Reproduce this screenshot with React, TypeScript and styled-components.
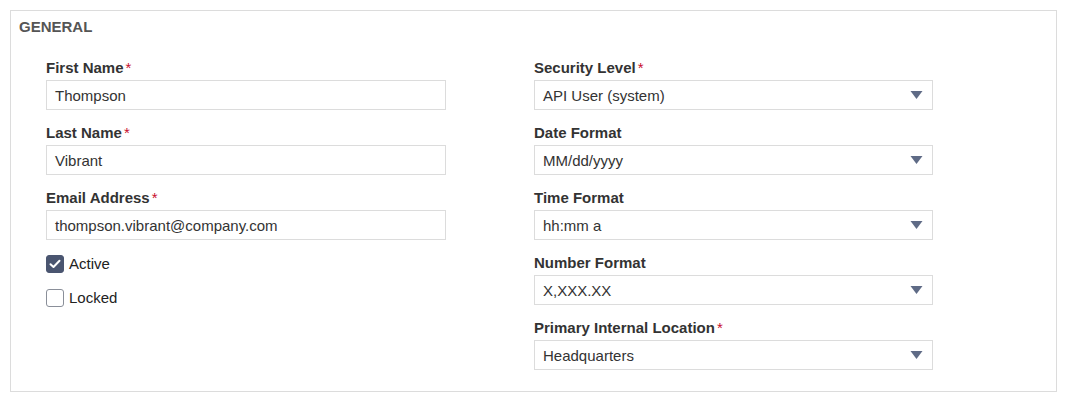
import React from "react";
import styled, { createGlobalStyle } from "styled-components";

const GlobalStyle = createGlobalStyle`
  body {
    margin: 0;
    background: #fff;
    font-family: "Liberation Sans", Arial, sans-serif;
  }
`;

interface FieldProps {
  label: string;
  value: string;
  required?: boolean;
  select?: boolean;
}

const Field = ({ label, value, required, select }: FieldProps) => (
  <FieldWrap>
    <Label>
      {label}
      {required && <Star>*</Star>}
    </Label>
    <Input $select={select}>
      <span>{value}</span>
      {select && (
        <Arrow viewBox="0 0 12 8">
          <path d="M0 0 H12 L6 8 Z" fill="#5f6b86" />
        </Arrow>
      )}
    </Input>
  </FieldWrap>
);

const CheckIcon = () => (
  <svg width="12" height="10" viewBox="0 0 12 10">
    <path
      d="M1.5 5.2 L4.5 8 L10.5 1.8"
      fill="none"
      stroke="#fff"
      strokeWidth="2"
      strokeLinecap="round"
      strokeLinejoin="round"
    />
  </svg>
);

export default function App() {
  return (
    <>
      <GlobalStyle />
      <Section>
        <SectionTitle>GENERAL</SectionTitle>
        <Columns>
          <Column>
            <Field label="First Name" value="Thompson" required />
            <Field label="Last Name" value="Vibrant" required />
            <Field
              label="Email Address"
              value="thompson.vibrant@company.com"
              required
            />
            <Checks>
              <CheckRow>
                <Box $checked>
                  <CheckIcon />
                </Box>
                Active
              </CheckRow>
              <CheckRow>
                <Box />
                Locked
              </CheckRow>
            </Checks>
          </Column>
          <Column>
            <Field
              label="Security Level"
              value="API User (system)"
              required
              select
            />
            <Field label="Date Format" value="MM/dd/yyyy" select />
            <Field label="Time Format" value="hh:mm a" select />
            <Field label="Number Format" value="X,XXX.XX" select />
            <Field
              label="Primary Internal Location"
              value="Headquarters"
              required
              select
            />
          </Column>
        </Columns>
      </Section>
    </>
  );
}

const Section = styled.div`
  box-sizing: border-box;
  margin: 10px 10px 0 10px;
  width: 1047px;
  height: 382px;
  border: 1px solid #dcdcdc;
  padding: 7px 8px 0 8px;
`;
const SectionTitle = styled.div`
  font-size: 15px;
  font-weight: 700;
  line-height: 18px;
  color: #555;
`;
const Columns = styled.div`
  display: grid;
  grid-template-columns: 400px 399px;
  column-gap: 88px;
  padding-left: 27px;
  margin-top: 23px;
`;
const Column = styled.div`
  display: flex;
  flex-direction: column;
  gap: 14px;
`;
const FieldWrap = styled.div`
  display: flex;
  flex-direction: column;
  gap: 3px;
`;
const Label = styled.div`
  font-size: 15px;
  font-weight: 700;
  line-height: 18px;
  color: #333;
`;
const Star = styled.span`
  color: #c8102e;
  font-weight: 400;
  margin-left: 2px;
`;
const Input = styled.div<{ $select?: boolean }>`
  box-sizing: border-box;
  height: 30px;
  border: 1px solid #dcdcdc;
  padding: 0 8px;
  display: flex;
  align-items: center;
  justify-content: space-between;
  font-size: 15px;
  color: #333;
  background: #fff;
`;
const Arrow = styled.svg`
  width: 13px;
  height: 8px;
  margin-right: 1px;
`;
const Checks = styled.div`
  display: flex;
  flex-direction: column;
  gap: 16px;
  margin-top: 1px;
`;
const CheckRow = styled.div`
  display: flex;
  align-items: center;
  gap: 5px;
  font-size: 15px;
  line-height: 18px;
  color: #222;
`;
const Box = styled.div<{ $checked?: boolean }>`
  box-sizing: border-box;
  width: 18px;
  height: 18px;
  border-radius: 3px;
  border: 1px solid ${(p) => (p.$checked ? "#4a5570" : "#8a8f99")};
  background: ${(p) => (p.$checked ? "#4a5570" : "#fff")};
  display: flex;
  align-items: center;
  justify-content: center;
`;
